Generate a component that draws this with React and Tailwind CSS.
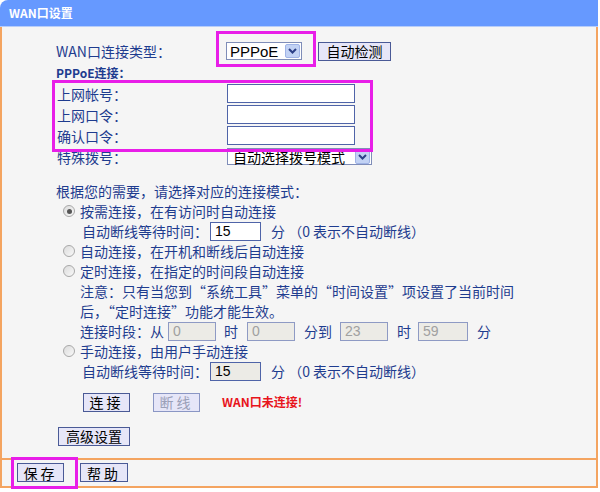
import React from 'react';

const font = { fontFamily: '"Noto Sans CJK SC", "Liberation Sans", sans-serif' };

function Btn({ children, disabled, className = '' }) {
  return (
    <div
      className={`flex items-center justify-center h-[19px] border border-[#4a5a96] bg-[#e6e6f8] text-[14px] leading-none ${disabled ? 'text-[#9aa0b8] border-[#8a96c4]' : 'text-black'} ${className}`}
    >
      {children}
    </div>
  );
}

function Input({ value = '', disabled, className = '' }) {
  return (
    <div
      className={`flex items-center h-[19px] border border-[#4f64a8] pl-[4px] text-[14px] leading-none ${disabled ? 'bg-[#ecebe6] text-[#a0a0a0] border-[#8e9ac4]' : 'bg-white text-black'} ${className}`}
      style={{ fontFamily: '"Liberation Sans", sans-serif' }}
    >
      {value}
    </div>
  );
}

function Arrow() {
  return (
    <div className="flex items-center justify-center w-[15px] h-[14px] bg-[#c2d2f4] border border-[#9fb3e6] rounded-[2px]">
      <svg width="9" height="6" viewBox="0 0 9 6">
        <path d="M1 1 L4.5 4.5 L8 1" stroke="#2b3f86" strokeWidth="2" fill="none" />
      </svg>
    </div>
  );
}

function Radio({ checked }) {
  return (
    <span className="flex items-center justify-center w-[12px] h-[12px] rounded-full border border-[#a8a8a8] bg-gradient-to-br from-[#dcdcdc] to-[#f8f8f8] mr-[5px]">
      {checked && <span className="w-[5px] h-[5px] rounded-full bg-[#555]" />}
    </span>
  );
}

function Row({ children, className = '' }) {
  return <div className={`flex items-center h-[20px] ${className}`}>{children}</div>;
}

export default function App() {
  return (
    <div className="relative w-[600px] h-[492px] bg-white text-[#1e3c8f]" style={font}>
      <div className="flex items-center h-[27px] w-[598px] bg-[#6699ff] rounded-tl-[8px] pl-[9px] text-white text-[12px] font-bold border-b border-[#b7cdfa]">
        WAN口设置
      </div>
      <div className="w-[598px] h-[461px] border-x-2 border-b-2 border-[#f4a460] bg-[#f5f5f5] flex flex-col">
        <div className="pt-[13px] text-[14px] leading-none">
          <div className="flex items-center h-[22px]">
            <div className="w-[224px] pl-[54px]">WAN口连接类型：</div>
            <div className="flex items-center justify-between w-[76px] h-[18px] border border-[#7f8db8] bg-white pl-[3px] pr-[1px] text-black" style={{ fontFamily: '"Liberation Sans", sans-serif' }}>
              <span className="text-[15px]">PPPoE</span>
              <Arrow />
            </div>
            <Btn className="ml-[16px] w-[73px] h-[18px]">自动检测</Btn>
          </div>
          <div className="flex items-center h-[21px] pl-[54px] text-[12px] font-bold">PPPoE连接：</div>
          <div className="flex items-center h-[21px]">
            <div className="w-[225px] pl-[55px]">上网帐号：</div>
            <Input className="w-[128px]" />
          </div>
          <div className="flex items-center h-[21px]">
            <div className="w-[225px] pl-[55px]">上网口令：</div>
            <Input className="w-[128px]" />
          </div>
          <div className="flex items-center h-[21px]">
            <div className="w-[225px] pl-[55px]">确认口令：</div>
            <Input className="w-[128px]" />
          </div>
          <div className="flex items-center h-[21px]">
            <div className="w-[225px] pl-[55px]">特殊拨号：</div>
            <div className="flex items-center justify-between w-[145px] h-[17px] border border-[#7f8db8] bg-white pl-[5px] pr-[1px] text-black">
              <span>自动选择拨号模式</span>
              <Arrow />
            </div>
          </div>

          <Row className="mt-[14px] pl-[54px]">根据您的需要，请选择对应的连接模式：</Row>
          <Row className="pl-[61px]"><Radio checked />按需连接，在有访问时自动连接</Row>
          <Row className="pl-[80px]">
            <span className="w-[128px]">自动断线等待时间：</span>
            <Input value="15" className="w-[51px]" />
            <span className="ml-[10px]">分 （0 表示不自动断线）</span>
          </Row>
          <Row className="pl-[61px]"><Radio />自动连接，在开机和断线后自动连接</Row>
          <Row className="pl-[61px]"><Radio />定时连接，在指定的时间段自动连接</Row>
          <Row className="pl-[78px]">注意：只有当您到“系统工具”菜单的“时间设置”项设置了当前时间</Row>
          <Row className="pl-[78px]">后，“定时连接”功能才能生效。</Row>
          <Row className="pl-[78px]">
            <span className="w-[88px]">连接时段：从</span>
            <Input value="0" disabled className="w-[48px]" />
            <span className="w-[31px] pl-[8px]">时</span>
            <Input value="0" disabled className="w-[48px]" />
            <span className="w-[45px] pl-[9px]">分到</span>
            <Input value="23" disabled className="w-[48px]" />
            <span className="w-[30px] pl-[9px]">时</span>
            <Input value="59" disabled className="w-[50px]" />
            <span className="pl-[9px]">分</span>
          </Row>
          <Row className="pl-[61px]"><Radio />手动连接，由用户手动连接</Row>
          <Row className="pl-[80px]">
            <span className="w-[128px]">自动断线等待时间：</span>
            <Input value="15" disabled className="w-[51px] !bg-[#ecebe6] !text-black !border-[#4f64a8]" />
            <span className="ml-[10px]">分 （0 表示不自动断线）</span>
          </Row>

          <div className="flex items-center h-[20px] mt-[11px] pl-[81px]">
            <Btn className="w-[47px] tracking-[3px]">连接</Btn>
            <Btn disabled className="w-[47px] ml-[23px] tracking-[3px]">断线</Btn>
            <span className="ml-[22px] text-[#e8141c] text-[12px] font-bold">WAN口未连接!</span>
          </div>
          <div className="flex items-center h-[20px] mt-[14px] pl-[56px]">
            <Btn className="w-[72px]">高级设置</Btn>
          </div>
        </div>
        <div className="mt-auto border-t-2 border-[#f4a460] h-[28px] flex items-center pl-[15px] pb-[1px]">
          <Btn className="w-[47px] tracking-[3px]">保存</Btn>
          <Btn className="w-[48px] ml-[16px] tracking-[3px]">帮助</Btn>
        </div>
      </div>

      <div className="absolute left-[216px] top-[31px] w-[100px] h-[36px] border-[3px] border-[#e81ee8]" />
      <div className="absolute left-[52px] top-[80px] w-[321px] h-[72px] border-[3px] border-[#e81ee8]" />
      <div className="absolute left-[11px] top-[457px] w-[67px] h-[32px] border-[3px] border-[#e81ee8]" />
    </div>
  );
}
